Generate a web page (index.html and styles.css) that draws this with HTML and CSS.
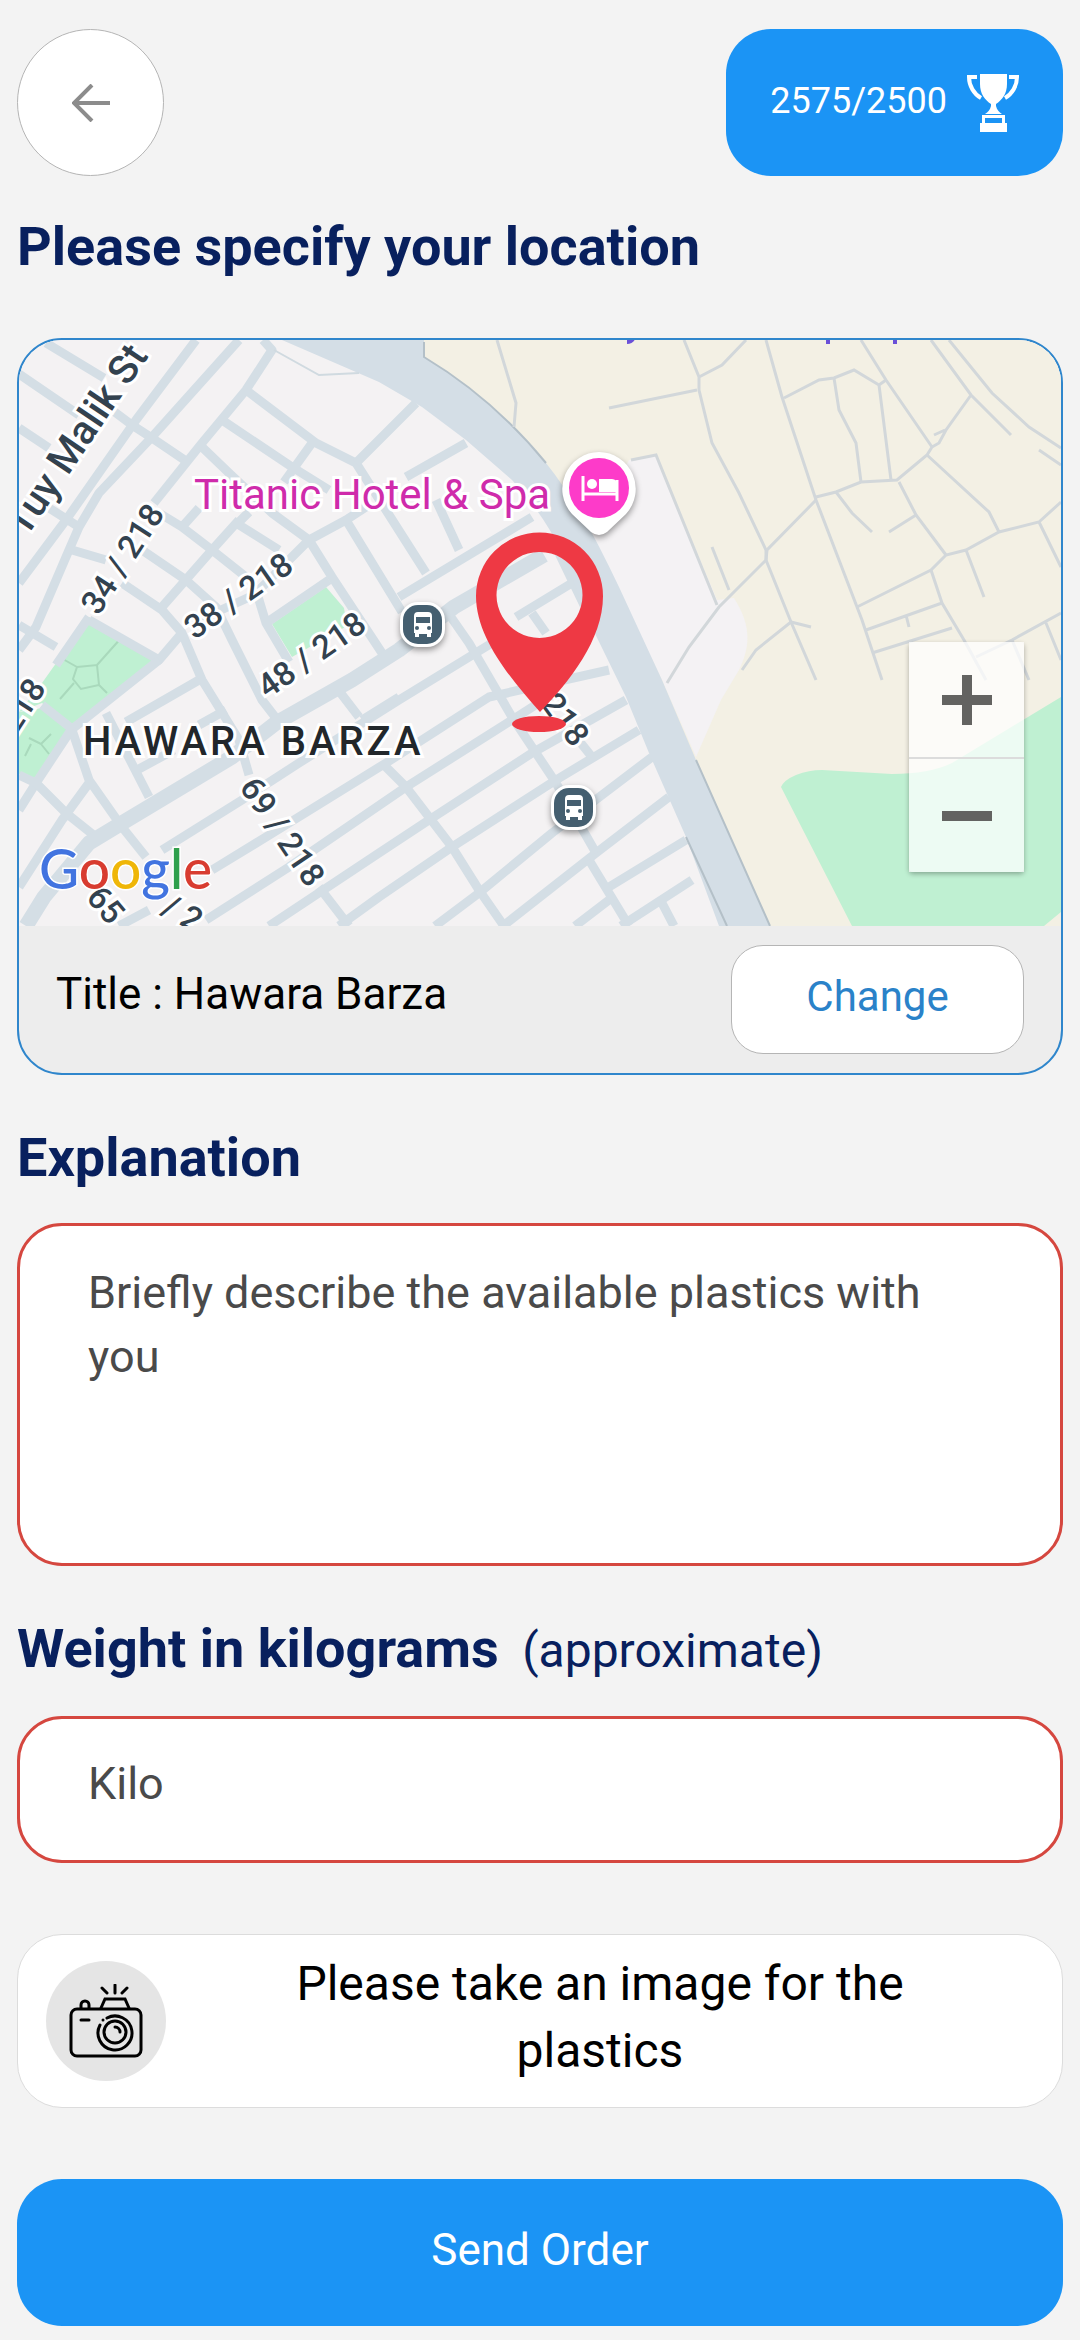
FILE: index.html
```html
<!DOCTYPE html>
<html lang="en">
<head>
  <meta charset="UTF-8">
  <meta name="viewport" content="width=device-width, initial-scale=1.0">
  <title>New Order</title>
  <link rel="stylesheet" href="styles.css">
</head>
<body>

  <header class="topbar">
    <button type="button" class="back-btn" aria-label="Back">
      <svg viewBox="0 0 38 38" width="38" height="38" fill="none" stroke="#8c8c8c" stroke-width="4">
        <path d="M38 19H3M20 1L2 19l18 18"/>
      </svg>
    </button>
    <div class="points">
      <span>2575/2500</span>
      <svg viewBox="0 0 52 58" width="52" height="58" fill="#fff">
        <path d="M13 0h27v10c0 10-5 16-11 20v2c1 4 3 6 6 8h-17c3-2 5-4 6-8v-2c-6-4-11-10-11-20z"/>
        <path d="M10 3H2c0 9 5 17 12 21M42 3h8c0 9-5 17-12 21" fill="none" stroke="#fff" stroke-width="4"/>
        <path fill-rule="evenodd" d="M15 41h23v8h2v9H13v-9h2zM18 44v5h17v-5z"/>
      </svg>
    </div>
  </header>

  <main>
    <h2 class="location-title">Please specify your location</h2>

    <section class="map-card">
      <div class="map">
        <svg class="map-canvas" viewBox="20 340 1042 586" preserveAspectRatio="xMidYMid slice">
          <rect x="20" y="340" width="1042" height="586" fill="#f4f2f3"/>
          <path fill="#f3f0e4" d="M425 340H1062V926H770L700 780L600 540L425 357z"/>
          <path fill="#f4f2f4" d="M590 530L630 460L657 455L718 600L735 598C752 625 752 645 740 670L722 700L697 757L663 680z"/>
          <path fill="#bff0d2" d="M782 787Q785 780 797 775Q810 770 823 770L893 774Q930 774 953 763L1062 697V912L1045 926H853z"/>

          <!-- parks -->
          <g fill="#bff0d2">
            <path d="M90 617L157 660L72 725L43 703L20 712L43 683z"/>
            <path d="M20 712L43 708L68 730L37 780L20 774z"/>
            <path d="M273 624L327 587L345 608L348 626L293 657z"/>
          </g>
          <path fill="none" stroke="#a9d9bc" stroke-width="2" d="M62 658l16 9M78 667l20-2 2 20-18 4-8-10zM98 665l25-28M75 683l-14 16M100 685l8 8M30 738l12 6 10-10M32 744l-6 12M42 744l8 10"/>

          <!-- streets -->
          <g fill="none" stroke="#d4dee5" stroke-width="9" stroke-linejoin="round">
            <path d="M47 343L105 378M20 374L80 415M20 428L50 448M50 508L80 527M113 410L133 425L153 438L190 463"/>
            <path d="M197 340L137 420L67 520L20 583"/>
            <path d="M240 340L153 437L100 493L80 527L70 550L37 627L20 650"/>
            <path d="M264 340L273 350L247 390L203 443L187 463L155 503"/>
            <path d="M247 390L317 443L357 463L427 573M223 420L293 467L330 490M313 443L285 482"/>
            <path d="M203 447L230 473L273 513L310 540L333 577L383 653"/>
            <path d="M357 463L417 403M407 477L467 443M347 520L403 612M437 500L460 550"/>
            <path d="M367 507L347 520L310 540L255 595L200 620"/>
            <path d="M160 513L183 527L213 550L247 577M183 527L200 508M240 520L213 550L163 607M237 523L280 550M250 512L240 522"/>
            <path d="M143 550L187 580L217 607L233 640L263 700L280 722M73 550L107 560"/>
            <path d="M123 583L163 610L183 633L203 680L240 740L250 775M183 633L160 660L90 620"/>
            <path d="M90 617L57 665M57 647L20 625M160 660L72 730L37 783L20 810M43 705L72 728"/>
            <path d="M200 680L127 722M227 710L200 725M267 623L330 580M257 590L267 623L290 662"/>
            <path d="M73 730L90 780L123 827L147 857M20 775L37 783L67 813L97 837M90 783L63 820L20 887M107 713L150 797M138 770L175 750"/>
            <path d="M163 850L243 800L300 763L400 700L493 643M517 617L573 583M400 597L533 517"/>
            <path d="M213 870L290 823L387 763L490 697L610 670M363 720L400 697"/>
            <path d="M207 920L290 867L407 787L513 720L560 690"/>
            <path d="M270 926L380 853L430 820L533 753L627 700"/>
            <path d="M340 926L380 897L453 847L557 780L640 730"/>
            <path d="M436 926L480 893L553 833L653 757M504 926L597 853L670 797"/>
            <path d="M576 926L610 900M610 887L687 840M622 926L693 880M120 926L150 910"/>
            <path d="M320 887L350 926M337 687L360 717M383 763L407 787L453 847L480 890L505 926"/>
            <path d="M447 610L470 643L513 717L557 783L597 853M590 860L630 926M533 613L547 633M577 737L593 757M560 553L585 605M663 903L675 926"/>
          </g>
          <path fill="none" stroke="#d4dee5" stroke-width="15" stroke-linejoin="round" d="M27 926L45 897L90 843L123 823L233 757L277 723L353 680L400 650L455 607L545 555"/>

          <!-- highway -->
          <path fill="#d4dee6" d="M283 340H425V357C480 390 520 430 547 463C580 505 600 545 620 587L663 680L697 760L740 857L771 926H720L687 837L650 753L627 697L583 607C570 560 550 520 513 480L467 440L423 407L380 382z"/>
          <path fill="none" stroke="#b4c0c8" stroke-width="2" d="M425 342V357C480 390 520 430 547 463M697 760L771 926M687 837L728 926"/>
          <path fill="none" stroke="#d0dae0" stroke-width="2" d="M275 350L320 375L360 373"/>

          <!-- lanes outside the town -->
          <g fill="none" stroke="#d2d7da" stroke-width="3">
            <path d="M685 340L700 377V390L713 443L740 493L767 550V560L792 622L817 680M700 377L723 365L747 340M610 408L698 390M498 340L517 403L515 427"/>
            <path d="M767 340L783 397L817 500L863 620L873 650L883 680M785 398L820 380L835 378L855 370L880 385L887 380M835 378L840 410L857 443L862 482M880 385L892 480"/>
            <path d="M862 340L887 380L933 447M817 497L837 492L862 482L898 480L928 455L933 447L940 443L947 430L972 395M935 435L946 430M932 340L972 395L1012 435"/>
            <path d="M950 340L993 393L1030 427L1062 448M1040 450L1062 465M817 500L768 550L767 560L720 607L690 647L668 683"/>
            <path d="M837 492L853 513L873 532M900 482L917 515L947 555M917 515L890 532M928 455L990 512L1000 532"/>
            <path d="M858 607L932 570L947 555L967 550L1000 532L1040 522L1062 502M967 550L985 597M1040 522L1062 567"/>
            <path d="M932 570L943 603L965 640L987 680M867 630L943 603M873 653L953 628M907 615L910 627M977 657L1013 640L1062 613M1047 623L1062 660M1013 640L1030 680"/>
            <path d="M792 622L757 650L743 670M792 622L812 627M632 460L657 455L718 605M713 547L730 590"/>
          </g>
          <path fill="none" stroke="#6a50d8" stroke-width="4" d="M628 342q4 0 6-3M829 340v4M896 340v4"/>

          <!-- labels -->
          <g class="street-label">
            <text class="street-main" text-anchor="end" transform="translate(150 356) rotate(-56)">Tuy Malik St</text>
            <text transform="translate(133 565) rotate(-57)">34 / 218</text>
            <text transform="translate(246 605) rotate(-35)">38 / 218</text>
            <text transform="translate(319 664) rotate(-35)">48 / 218</text>
            <text transform="translate(274 838) rotate(56)">69 / 218</text>
            <text transform="translate(557 726) rotate(54)">218</text>
            <text text-anchor="end" transform="translate(48 688) rotate(-57)">218</text>
            <text transform="translate(98 912) rotate(50)">65</text>
            <text transform="translate(178 923) rotate(30)">/ 2</text>
          </g>
          <text class="place-label" x="195" y="509">Titanic Hotel &amp; Spa</text>
          <text class="area-label" x="84" y="755">HAWARA BARZA</text>

          <!-- hotel marker -->
          <g class="marker">
            <path fill="#fff" d="M600 452a37 37 0 0 1 27 62l-19 18q-8 6-16 0l-19-18a37 37 0 0 1 27-62z"/>
            <circle cx="600" cy="488" r="30" fill="#fd3bc9"/>
            <path fill="none" stroke="#fff" stroke-width="3" d="M584 476v25M584 494h35M618 480v21"/>
            <circle cx="593" cy="484" r="5" fill="#fff"/>
            <path fill="#fff" d="M600 479h13q5 0 5 6v7h-18z"/>
          </g>

          <!-- bus stops -->
          <g class="marker" id="bus">
            <rect x="401" y="602" width="45" height="45" rx="18" fill="#fff"/>
            <rect x="404" y="605" width="39" height="39" rx="15" fill="#455f70"/>
            <path fill="#fff" fill-rule="evenodd" d="M419 612h10q4 0 4 4v17h-1v4h-4v-3h-8v3h-4v-4h-1v-17q0-4 4-4zM417 617v6h14v-6z"/>
            <circle cx="418" cy="628" r="2" fill="#455f70"/>
            <circle cx="430" cy="628" r="2" fill="#455f70"/>
          </g>
          <use href="#bus" x="151" y="183"/>

          <!-- selected location -->
          <g fill="#ee3944">
            <path fill-rule="evenodd" d="M541 712C515 682 477 640 477 596A63 63 0 0 1 604 596C604 640 570 682 541 712zM540 552a43 43 0 1 0 1 0z"/>
            <ellipse cx="540" cy="724" rx="27" ry="8"/>
          </g>

          <text class="google" x="40" y="889"><tspan fill="#4274e0">G</tspan><tspan fill="#d83c30">o</tspan><tspan fill="#efb608">o</tspan><tspan fill="#4274e0">g</tspan><tspan fill="#2fa04c">l</tspan><tspan fill="#d83c30">e</tspan></text>
        </svg>
        <div class="zoom-controls">
          <button type="button" aria-label="Zoom in">
            <svg viewBox="0 0 50 50" width="50" height="50" fill="#636361"><path d="M20 0h10v20h20v10H30v20H20V30H0V20h20z"/></svg>
          </button>
          <button type="button" aria-label="Zoom out">
            <svg viewBox="0 0 50 50" width="50" height="50" fill="#636361"><path d="M0 20h50v10H0z"/></svg>
          </button>
        </div>
      </div>
      <div class="map-footer">
        <span class="map-title">Title : Hawara Barza</span>
        <button type="button" class="change-btn">Change</button>
      </div>
    </section>

    <form>
      <label for="explanation">Explanation</label>
      <textarea id="explanation" placeholder="Briefly describe the available plastics with you"></textarea>

      <label for="weight">Weight in kilograms <span class="hint">(approximate)</span></label>
      <input type="text" id="weight" placeholder="Kilo">

      <button type="button" class="photo-btn">
        <span class="photo-icon">
          <svg viewBox="0 0 74 74" width="74" height="74" fill="none" stroke="#000" stroke-width="3" stroke-linecap="round">
            <rect x="2" y="25" width="70" height="47" rx="6"/>
            <path d="M12 24v-3a4 4 0 0 1 8 0v3M32 24l4-9h20l4 9M33 4l5 5M46 1v8M58 4l-5 5M12 36h8"/>
            <path d="M38 34a17 17 0 1 1-7 7M34 36v0"/>
            <circle cx="46" cy="48" r="11"/>
            <path d="M46 43a5 5 0 0 1 5 5"/>
          </svg>
        </span>
        <span class="photo-text">Please take an image for the plastics</span>
      </button>

      <button type="submit" class="send-btn">Send Order</button>
    </form>
  </main>

</body>
</html>
```
FILE: styles.css
```css
* {
  box-sizing: border-box;
}
body {
  font-family: Roboto, sans-serif;
  margin: 0;
  padding: 29px 17px 14px;
  min-height: 100vh;
  background-color: #f3f3f3;
  border-bottom: 2px solid #000;
  color: #000;
}
button, input, textarea {
  font-family: inherit;
  margin: 0;
}
button {
  cursor: pointer;
}
svg {
  display: block;
}

.topbar {
  display: flex;
  justify-content: space-between;
}
.back-btn {
  display: flex;
  align-items: center;
  justify-content: center;
  width: 147px;
  height: 147px;
  padding: 0;
  background-color: #fff;
  border: 1px solid #b5b5b5;
  border-radius: 50%;
}
.points {
  display: flex;
  align-items: center;
  gap: 20px;
  height: 147px;
  padding: 0 44px;
  background-color: #1b94f5;
  border-radius: 45px;
  color: #fff;
  font-size: 36px;
}
.points span {
  padding-bottom: 4px;
}

.location-title, label {
  display: block;
  color: #08205e;
  font-size: 54px;
  font-weight: bold;
  line-height: 60px;
}
.location-title {
  margin: 41px 0 61px;
}
label {
  margin: 53px 0 35px;
}
.hint {
  margin-left: 10px;
  font-size: 48px;
  font-weight: normal;
}

.map-card {
  overflow: hidden;
  background-color: #ededed;
  border: 2px solid #2f86cc;
  border-radius: 45px;
}
.map {
  position: relative;
}
.map-canvas {
  width: 100%;
  height: auto;
}
.street-label {
  fill: #33424f;
  stroke: #fff;
  stroke-width: 6px;
  paint-order: stroke;
  font-size: 33px;
  font-weight: 500;
  text-anchor: middle;
}
.street-main {
  font-size: 40px;
}
.place-label {
  fill: #cf2bab;
  stroke: #fff;
  stroke-width: 6px;
  paint-order: stroke;
  font-size: 42px;
}
.area-label {
  fill: #22272b;
  stroke: #fff;
  stroke-width: 6px;
  paint-order: stroke;
  font-size: 40px;
  font-weight: 500;
  letter-spacing: 3px;
}
.google {
  stroke: #fff;
  stroke-width: 3px;
  paint-order: stroke;
  font-family: Lato, sans-serif;
  font-size: 55px;
  font-weight: 500;
}
.marker {
  filter: drop-shadow(0 3px 3px rgba(0,0,0,0.4));
}

.zoom-controls {
  position: absolute;
  right: 37px;
  bottom: 54px;
  border-radius: 4px;
  box-shadow: 0 2px 5px rgba(0,0,0,0.3);
}
.zoom-controls button {
  display: flex;
  align-items: center;
  justify-content: center;
  width: 115px;
  height: 115px;
  padding: 0;
  background-color: rgba(255,255,255,0.72);
  border: none;
}
.zoom-controls button + button {
  border-top: 2px solid #dcdcdc;
}

.map-footer {
  display: flex;
  align-items: center;
  justify-content: space-between;
  height: 147px;
  padding: 0 37px;
}
.map-title {
  padding-bottom: 12px;
  font-size: 44px;
}
.change-btn {
  width: 293px;
  height: 109px;
  padding: 0 0 6px;
  background-color: #fff;
  border: 1px solid #b5b5b5;
  border-radius: 32px;
  color: #2a82c9;
  font-size: 42px;
}

input, textarea {
  display: block;
  width: 100%;
  background-color: #fff;
  border: 3px solid #d5473f;
  border-radius: 45px;
  color: #000;
  font-size: 45px;
  line-height: 64px;
}
textarea {
  height: 343px;
  padding: 35px 90px 35px 68px;
  resize: none;
}
input {
  height: 147px;
  padding: 0 68px 12px;
}
::placeholder {
  color: #4a4a4a;
}

.photo-btn {
  display: flex;
  align-items: center;
  width: 100%;
  margin-top: 71px;
  padding: 19px 28px;
  background-color: #fff;
  border: 1px solid #dcdcdc;
  border-radius: 45px;
  color: #000;
  font-size: 48px;
  line-height: 67px;
}
.photo-icon {
  display: flex;
  align-items: center;
  justify-content: center;
  width: 120px;
  height: 120px;
  background-color: #e5e5e5;
  border-radius: 50%;
}
.photo-text {
  flex: 1;
  margin: -4px 0 4px;
  padding: 0 100px;
}

.send-btn {
  display: block;
  width: 100%;
  height: 147px;
  margin-top: 71px;
  padding: 0 0 6px;
  background-color: #1b94f5;
  border: none;
  border-radius: 45px;
  color: #fff;
  font-size: 44px;
}
```
